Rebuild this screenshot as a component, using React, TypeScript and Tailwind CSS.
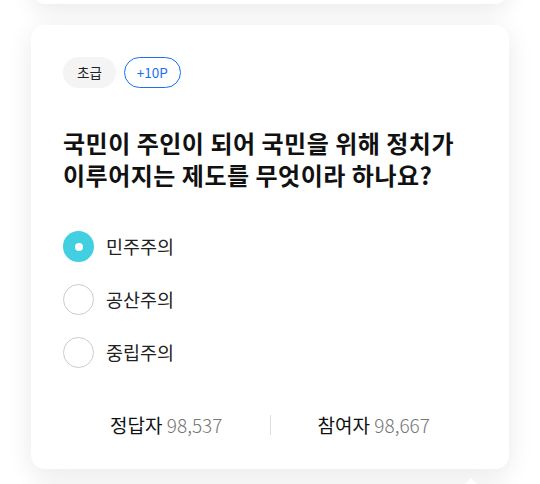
import { useState } from 'react';

const options = ['민주주의', '공산주의', '중립주의'];

export default function App() {
  const [selected, setSelected] = useState(0);

  return (
    <div
      className="min-h-[484px] overflow-hidden bg-white px-[31px]"
      style={{ fontFamily: '"Noto Sans CJK KR", "Noto Sans", sans-serif' }}
    >
      {/* 이전 카드 (위로 잘림) */}
      <div className="-mt-[60px] mx-[2px] h-[64px] rounded-xl bg-white shadow-[0_6px_24px_rgba(0,0,0,0.09)]" />

      {/* 퀴즈 카드 */}
      <div className="mt-[21px] rounded-[14px] bg-white px-[32px] pt-[32px] pb-[30px] shadow-[0_6px_26px_rgba(0,0,0,0.09)]">
        <div className="flex items-center gap-[8px]">
          <span className="flex h-[31px] items-center rounded-full bg-[#f4f4f4] px-[14px] text-[13.5px] text-[#222]">
            초급
          </span>
          <span className="flex h-[31px] items-center rounded-full border border-[#1a6ef5] px-[12px] text-[13.5px] text-[#1a6ef5]">
            +10P
          </span>
        </div>

        <h2 className="mt-[39px] text-[24px] font-bold leading-[32px] tracking-[0.5px] text-[#111]">
          국민이 주인이 되어 국민을 위해 정치가
          <br />
          이루어지는 제도를 무엇이라 하나요?
        </h2>

        <ul className="mt-[40px] flex flex-col gap-[22px]">
          {options.map((opt, i) => (
            <li key={opt}>
              <button onClick={() => setSelected(i)} className="flex items-center gap-[12px]">
                {selected === i ? (
                  <span className="flex h-[31px] w-[31px] items-center justify-center rounded-full bg-[#41cfe1]">
                    <span className="h-[8px] w-[8px] rounded-full bg-white" />
                  </span>
                ) : (
                  <span className="h-[31px] w-[31px] rounded-full border-[1.5px] border-[#cccccc] bg-white" />
                )}
                <span className="text-[18.5px] text-[#222]">{opt}</span>
              </button>
            </li>
          ))}
        </ul>

        <div className="mt-[43px] flex h-[28px] items-center">
          <div className="flex-1 text-center text-[19px] text-[#111]">
            정답자 <span className="font-light text-[#777]">98,537</span>
          </div>
          <div className="h-[20px] w-px bg-[#dddddd]" />
          <div className="flex-1 text-center text-[19px] text-[#111]">
            참여자 <span className="font-light text-[#777]">98,667</span>
          </div>
        </div>
      </div>

      {/* 다음 말풍선 (아래로 잘림) */}
      <div className="mt-[9px] flex justify-end pr-[30px]">
        <div className="h-0 w-0 border-x-[8px] border-b-[8px] border-x-transparent border-b-white" />
      </div>
      <div className="h-[60px] rounded-xl bg-white shadow-[0_6px_24px_rgba(0,0,0,0.09)]" />
    </div>
  );
}
